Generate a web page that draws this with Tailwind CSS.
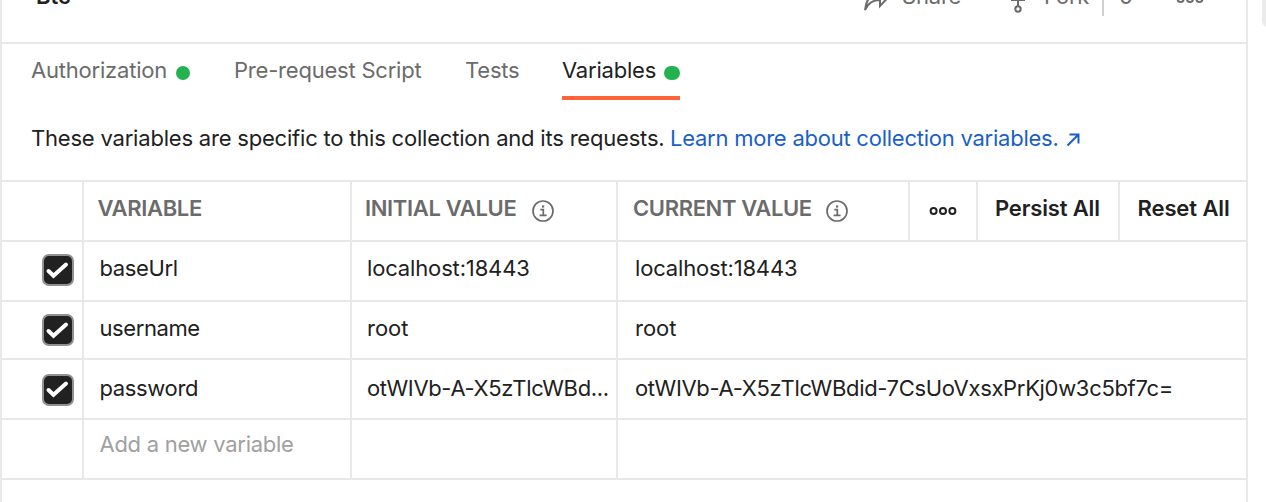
<!DOCTYPE html>
<html lang="en">
<head>
<meta charset="utf-8">
<title>Collection variables</title>
<script src="https://cdn.jsdelivr.net/npm/@tailwindcss/browser@4"></script>
</head>
<body class="w-[1266px] h-[502px] overflow-hidden bg-white font-['Inter',sans-serif] text-[22px] leading-6 text-[#212121] whitespace-nowrap">
<svg class="hidden">
  <symbol id="check" viewBox="0 0 32 32"><path d="M6.500 17 11.500 21.800 24 10.500" fill="none" stroke="#fff" stroke-width="4" stroke-linecap="round" stroke-linejoin="miter"/></symbol>
  <symbol id="info" viewBox="0 0 22 22"><circle cx="11" cy="11" r="10" fill="none" stroke="#6b6b6b" stroke-width="1.7"/><path d="M8.3 9.6H11.3V15.4M7.6 15.4H14.6" fill="none" stroke="#6b6b6b" stroke-width="1.7"/><rect x="10" y="5.4" width="2.2" height="2.2" fill="#6b6b6b"/></symbol>
  <symbol id="dots" viewBox="0 0 28 10"><g fill="none" stroke="currentColor" stroke-width="2"><circle cx="4.6" cy="5" r="3"/><circle cx="14" cy="5" r="3"/><circle cx="23.4" cy="5" r="3"/></g></symbol>
</svg>
<div class="flex h-full">
  <main class="w-[1248px] shrink-0 h-full border-x-2 border-[#e8e8e8]">
    <header class="flex h-11 border-b-2 border-[#e8e8e8] overflow-hidden text-[#6b6b6b] *:shrink-0">
      <div class="-mt-4 ml-[34px] w-[827px] font-semibold text-[#212121]">Btc</div>
      <svg class="-mt-4 w-7 h-7" viewBox="0 0 28 28" fill="none" stroke="#6b6b6b" stroke-width="2"><path d="M2 26C3 16 8 10 16 9.500V3L26 12.500 17 22V16C10 16 5 19 2 26Z"/></svg>
      <span class="-mt-4 ml-[11px] w-[107px] tracking-[-0.2px]">Share</span>
      <svg class="-mt-4 w-6 h-[30px]" viewBox="0 0 24 30" fill="none" stroke="#6b6b6b" stroke-width="2"><circle cx="9" cy="25" r="2.700"/><path d="M9 22V16M3 10V16H15V10"/></svg>
      <span class="-mt-4 ml-[11px] w-[58px] tracking-[-0.2px]">Fork</span>
      <div class="h-4 w-0.5 bg-[#d0d0d0]"></div>
      <span class="-mt-4 ml-[15px] w-[57px]">0</span>
      <svg class="-mt-[6px] w-7 h-[10px]"><use href="#dots"/></svg>
    </header>
    <nav class="flex h-14 pl-[29px] pt-[14px] text-[#6b6b6b] tracking-[-0.21px]">
      <div class="flex w-[203px]"><span class="w-[136px]">Authorization</span><i class="ml-[9px] mt-2 size-[14px] rounded-full bg-[#24b250]"></i></div>
      <div class="w-[231px]">Pre-request Script</div>
      <div class="w-[97px]">Tests</div>
      <div class="flex w-[118px] h-[42px] justify-between border-b-4 border-[#ff6339] text-[#212121]"><span>Variables</span><i class="mt-2 w-4 h-[14px] rounded-[7px] bg-[#24b250]"></i></div>
    </nav>
    <p class="flex h-20 pl-[29px] pt-[26px]"><span class="w-[633px] tracking-[-0.2px]">These variables are specific to this collection and its requests.</span><a class="ml-[6px] flex text-[#1a5fc8]"><span class="w-[387px] tracking-[-0.24px]">Learn more about collection variables.</span><svg class="ml-[9px] mt-[7px] size-[14px]" viewBox="0 0 14 14" fill="none" stroke="currentColor" stroke-width="2"><path d="M1.500 12.500 12 2M3.500 1.500H12.500V10.500"/></svg></a></p>
    <section class="border-y-2 border-[#e8e8e8]">
      <div class="grid grid-cols-[80px_268px_266px_292px_68px_142px_1fr] h-[58px] font-semibold *:border-[#e8e8e8] *:pt-[14px]">
        <div></div>
        <div class="border-l-2 pl-[13.5px] text-[#6b6b6b] tracking-[-0.33px]">VARIABLE</div>
        <div class="flex border-l-2 pl-[13px] text-[#6b6b6b] tracking-[-0.34px]"><span class="w-[167px]">INITIAL VALUE</span><svg class="mt-1 size-[22px]"><use href="#info"/></svg></div>
        <div class="flex border-l-2 pl-[15px] text-[#6b6b6b] tracking-[-0.36px]"><span class="w-[193px]">CURRENT VALUE</span><svg class="mt-1 size-[22px]"><use href="#info"/></svg></div>
        <div class="border-l-2 pl-[19px]"><svg class="mt-[10px] w-7 h-[10px]"><use href="#dots"/></svg></div>
        <div class="border-l-2 pl-[17px] tracking-[-0.16px]">Persist All</div>
        <div class="border-l-2 pl-[17.5px] tracking-[-0.1px]">Reset All</div>
      </div>
      <div class="grid grid-cols-[80px_268px_266px_1fr] h-[60px] border-t-2 border-[#e8e8e8] *:border-[#e8e8e8] *:pt-[14px]">
        <div class="pl-10"><div class="-mt-0.5 size-8 rounded-[7px] border-2 border-[#919191] bg-[#212121]"><svg class="-m-0.5 size-8"><use href="#check"/></svg></div></div>
        <div class="border-l-2 pl-[15.5px] tracking-[-0.35px]">baseUrl</div><div class="border-l-2 pl-[15px] tracking-[-0.15px]">localhost:18443</div><div class="border-l-2 pl-[17px] tracking-[-0.17px]">localhost:18443</div>
      </div>
      <div class="grid grid-cols-[80px_268px_266px_1fr] h-[58px] border-t-2 border-[#e8e8e8] *:border-[#e8e8e8] *:pt-[14px]">
        <div class="pl-10"><div class="-mt-0.5 size-8 rounded-[7px] border-2 border-[#919191] bg-[#212121]"><svg class="-m-0.5 size-8"><use href="#check"/></svg></div></div>
        <div class="border-l-2 pl-[15.5px] tracking-[-0.42px]">username</div><div class="border-l-2 pl-[15px]">root</div><div class="border-l-2 pl-[17px]">root</div>
      </div>
      <div class="grid grid-cols-[80px_268px_266px_1fr] h-[60px] border-t-2 border-[#e8e8e8] *:border-[#e8e8e8] *:pt-4">
        <div class="pl-10"><div class="-mt-0.5 size-8 rounded-[7px] border-2 border-[#919191] bg-[#212121]"><svg class="-m-0.5 size-8 -mt-[3px]"><use href="#check"/></svg></div></div>
        <div class="border-l-2 pl-[15.5px] tracking-[-0.36px]">password</div><div class="border-l-2 pl-[15px] tracking-[-0.34px]">otWIVb-A-X5zTlcWBd...</div><div class="border-l-2 pl-[17px] tracking-[-0.32px]">otWIVb-A-X5zTlcWBdid-7CsUoVxsxPrKj0w3c5bf7c=</div>
      </div>
      <div class="grid grid-cols-[80px_268px_266px_1fr] h-[60px] border-t-2 border-[#e8e8e8] *:border-[#e8e8e8] *:pt-3">
        <div></div><div class="border-l-2 pl-[15.5px] text-[#a0a0a0] tracking-[-0.27px]">Add a new variable</div><div class="border-l-2"></div><div class="border-l-2"></div>
      </div>
    </section>
  </main>
  <div class="ml-[14px] h-[27px] w-4 shrink-0 rounded-bl-[6px] bg-[#ebebeb]"></div>
</div>
</body>
</html>
